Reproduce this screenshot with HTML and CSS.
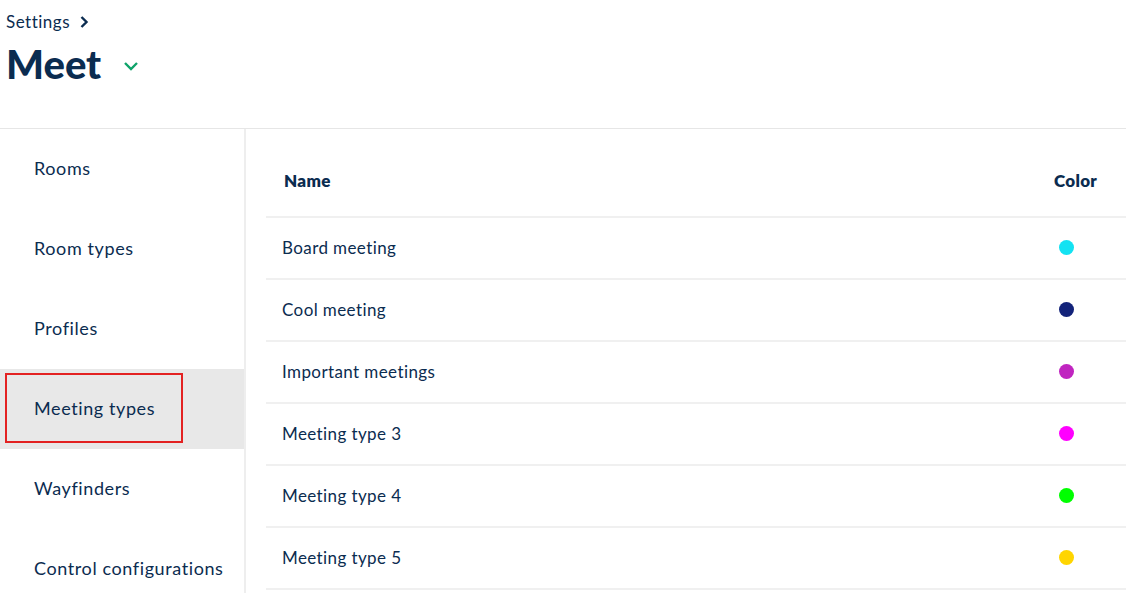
FILE: index.html
```html
<!DOCTYPE html>
<html lang="en">
<head>
    <meta charset="UTF-8">
    <title>Meet settings</title>
    <link rel="stylesheet" href="styles.css">
</head>
<body>
    <div class="page-header">
        <div class="crumb">
            Settings
            <svg class="crumb-arrow" width="10" height="14" viewBox="0 0 10 14"><path d="M2.5 2 L7.5 7 L2.5 12" fill="none" stroke="#0b2c50" stroke-width="2.4"/></svg>
        </div>
        <div class="title-row">
            <h1 class="title">Meet</h1>
            <svg class="title-toggle" width="16" height="10" viewBox="0 0 16 10"><path d="M2 2 L8 8 L14 2" fill="none" stroke="#0fa36a" stroke-width="2.4"/></svg>
        </div>
    </div>
    <div class="main">
        <div class="sidebar">
            <div class="nav-item">Rooms</div>
            <div class="nav-item">Room types</div>
            <div class="nav-item">Profiles</div>
            <div class="nav-item active">Meeting types<span class="highlight"></span></div>
            <div class="nav-item">Wayfinders</div>
            <div class="nav-item">Control configurations</div>
        </div>
        <div class="content">
            <table class="types">
                <thead>
                    <tr><th class="name-col">Name</th><th class="color-col">Color</th></tr>
                </thead>
                <tbody>
                    <tr><td>Board meeting</td><td class="color-col"><span class="dot" style="background:#13e2f2"></span></td></tr>
                    <tr><td>Cool meeting</td><td class="color-col"><span class="dot" style="background:#13237a"></span></td></tr>
                    <tr><td>Important meetings</td><td class="color-col"><span class="dot" style="background:#c025c0"></span></td></tr>
                    <tr><td>Meeting type 3</td><td class="color-col"><span class="dot" style="background:#ff00ff"></span></td></tr>
                    <tr><td>Meeting type 4</td><td class="color-col"><span class="dot" style="background:#00ff00"></span></td></tr>
                    <tr><td>Meeting type 5</td><td class="color-col"><span class="dot" style="background:#ffd500"></span></td></tr>
                </tbody>
            </table>
        </div>
    </div>
</body>
</html>
```

FILE: styles.css
```css
body {
    margin: 0;
    font-family: Lato, "Noto Sans", sans-serif;
    color: #0b2c50;
    background: white;
    overflow: hidden;
}

.page-header {
    height: 129px;
    border-bottom: 1px solid #e6e6e6;
    padding-left: 6px;
    box-sizing: border-box;
}

.crumb {
    padding-top: 11px;
    font-size: 17px;
    line-height: 22px;
    letter-spacing: 0.5px;
    display: flex;
    align-items: center;
    gap: 9px;
}

.title-row {
    display: flex;
    align-items: center;
    margin-top: 6px;
}

.title {
    margin: 0;
    font-size: 40px;
    font-weight: 900;
    line-height: 50px;
}

.title-toggle {
    margin-left: 22px;
    margin-top: 4px;
}

.main {
    display: flex;
}

.sidebar {
    width: 244px;
    border-right: 2px solid #eeeeee;
    flex-shrink: 0;
}

.nav-item {
    position: relative;
    height: 80px;
    box-sizing: border-box;
    padding: 0 0 2px 34px;
    display: flex;
    align-items: center;
    font-size: 18px;
    letter-spacing: 0.6px;
}

.nav-item.active {
    background-color: #e8e8e8;
}

.highlight {
    position: absolute;
    left: 5px;
    top: 4px;
    width: 178px;
    height: 70px;
    border: 2px solid #e32222;
    box-sizing: border-box;
}

.content {
    flex: 1;
    padding: 19px 0 0 20px;
}

.types {
    width: 100%;
    border-collapse: collapse;
}

.types th {
    height: 64px;
    padding: 0 0 4px 18px;
    font-size: 17px;
    font-weight: 800;
    letter-spacing: 0.3px;
    text-align: left;
    border-bottom: 2px solid #f0f0f0;
}

.types td {
    height: 59px;
    padding: 0 0 1px 16px;
    font-size: 17px;
    letter-spacing: 0.4px;
    border-bottom: 2px solid #f0f0f0;
}

.types .color-col {
    width: 72px;
    padding-left: 0;
}

.dot {
    display: block;
    width: 15px;
    height: 15px;
    border-radius: 50%;
    margin-left: 5px;
}
```
